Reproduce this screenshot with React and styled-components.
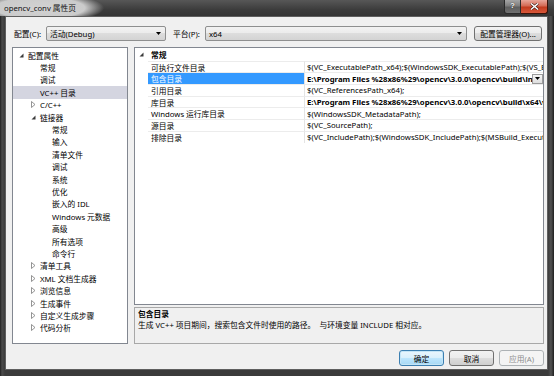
import styled, { createGlobalStyle } from "styled-components";

const GlobalStyle = createGlobalStyle`
  html, body { margin: 0; padding: 0; }
  body {
    width: 554px;
    height: 376px;
    overflow: hidden;
    font-family: "Noto Sans", "Noto Sans CJK SC", sans-serif;
    font-size: 7.75px;
    color: #000;
  }
`;

const treeItems = [
  { label: "配置属性", level: 0, exp: "open" },
  { label: "常规", level: 1 },
  { label: "调试", level: 1 },
  { label: "VC++ 目录", level: 1, selected: true },
  { label: "C/C++", level: 1, exp: "closed" },
  { label: "链接器", level: 1, exp: "open" },
  { label: "常规", level: 2 },
  { label: "输入", level: 2 },
  { label: "清单文件", level: 2 },
  { label: "调试", level: 2 },
  { label: "系统", level: 2 },
  { label: "优化", level: 2 },
  { label: "嵌入的 IDL", level: 2 },
  { label: "Windows 元数据", level: 2 },
  { label: "高级", level: 2 },
  { label: "所有选项", level: 2 },
  { label: "命令行", level: 2 },
  { label: "清单工具", level: 1, exp: "closed" },
  { label: "XML 文档生成器", level: 1, exp: "closed" },
  { label: "浏览信息", level: 1, exp: "closed" },
  { label: "生成事件", level: 1, exp: "closed" },
  { label: "自定义生成步骤", level: 1, exp: "closed" },
  { label: "代码分析", level: 1, exp: "closed" },
];

const gridRows = [
  { name: "可执行文件目录", value: "$(VC_ExecutablePath_x64);$(WindowsSDK_ExecutablePath);$(VS_ExecutablePath);$(MSBuild_ExecutablePath)" },
  { name: "包含目录", value: "E:\\Program Files %28x86%29\\opencv\\3.0.0\\opencv\\build\\include;E:\\Program Files", bold: true, selected: true },
  { name: "引用目录", value: "$(VC_ReferencesPath_x64);" },
  { name: "库目录", value: "E:\\Program Files %28x86%29\\opencv\\3.0.0\\opencv\\build\\x64\\vc12\\lib;$(LibraryPath)", bold: true },
  { name: "Windows 运行库目录", value: "$(WindowsSDK_MetadataPath);" },
  { name: "源目录", value: "$(VC_SourcePath);" },
  { name: "排除目录", value: "$(VC_IncludePath);$(WindowsSDK_IncludePath);$(MSBuild_ExecutablePath);$(VC_LibraryPath_x64)" },
];

function OpenArrow() {
  return (
    <svg width="5" height="5" viewBox="0 0 5 5">
      <polygon points="4.5,0.5 4.5,4.5 0.5,4.5" fill="#3a3a3a" />
    </svg>
  );
}

function ClosedArrow() {
  return (
    <svg width="5" height="7" viewBox="0 0 5 7">
      <polygon points="0.5,0.5 4,3.5 0.5,6.5" fill="#fff" stroke="#7a7a7a" strokeWidth="0.8" />
    </svg>
  );
}

function ComboArrow() {
  return (
    <svg width="5" height="3" viewBox="0 0 5 3">
      <polygon points="0,0 5,0 2.5,3" fill="#000" />
    </svg>
  );
}

export default function App() {
  return (
    <>
      <GlobalStyle />
      <Frame>
        <TitleBar>
          <TitleText>opencv_conv 属性页</TitleText>
          <CaptionButtons>
            <HelpButton>?</HelpButton>
            <CloseButton>
              <svg width="9" height="7" viewBox="0 0 9 7">
                <path d="M1 0.5 L8 6.5 M8 0.5 L1 6.5" stroke="#3a1a14" strokeWidth="2.6" />
                <path d="M1 0.5 L8 6.5 M8 0.5 L1 6.5" stroke="#fff" strokeWidth="1.5" />
              </svg>
            </CloseButton>
          </CaptionButtons>
        </TitleBar>

        <Client>
          <ConfigRow>
            <FieldLabel>配置(C):</FieldLabel>
            <Combo width="120px">
              <span>活动(Debug)</span>
              <ComboArrow />
            </Combo>
            <FieldLabel gap="6px">平台(P):</FieldLabel>
            <Combo grow>
              <span>x64</span>
              <ComboArrow />
            </Combo>
            <PushButton width="68px" gap="7px">配置管理器(O)...</PushButton>
          </ConfigRow>

          <MainArea>
            <Tree>
              {treeItems.map((item, i) => (
                <TreeRow key={i} level={item.level} selected={item.selected}>
                  <ExpSlot>
                    {item.exp === "open" && <OpenArrow />}
                    {item.exp === "closed" && <ClosedArrow />}
                  </ExpSlot>
                  <span>{item.label}</span>
                </TreeRow>
              ))}
            </Tree>

            <RightColumn>
              <Grid>
                <CategoryRow>
                  <MarginCell>
                    <OpenArrow />
                  </MarginCell>
                  <CategoryName>常规</CategoryName>
                </CategoryRow>
                {gridRows.map((row, i) => (
                  <PropRow key={i}>
                    <MarginCell />
                    <NameCell selected={row.selected}>{row.name}</NameCell>
                    <ValueCell bold={row.bold}>
                      <ValueText>{row.value}</ValueText>
                      {row.selected && (
                        <DropButton>
                          <ComboArrow />
                        </DropButton>
                      )}
                    </ValueCell>
                  </PropRow>
                ))}
              </Grid>
              <Description>
                <DescTitle>包含目录</DescTitle>
                <div>生成 VC++ 项目期间，搜索包含文件时使用的路径。&nbsp; 与环境变量 INCLUDE 相对应。</div>
              </Description>
            </RightColumn>
          </MainArea>

          <ButtonRow>
            <PushButton width="45px" height="16px" variant="default">确定</PushButton>
            <PushButton width="45px" height="16px">取消</PushButton>
            <PushButton width="45px" height="16px" variant="disabled">应用(A)</PushButton>
          </ButtonRow>
        </Client>
      </Frame>
    </>
  );
}

const Frame = styled.div`
  width: 554px;
  height: 376px;
  box-sizing: border-box;
  display: flex;
  flex-direction: column;
  background: linear-gradient(to right, #1f1f1f 0, #4b4b4b 2px, #3b3b3b 5px, #3b3b3b calc(100% - 6px), #525252 calc(100% - 3px), #1f1f1f 100%);
`;

const TitleBar = styled.div`
  height: 16px;
  flex: none;
  display: flex;
  align-items: flex-start;
  justify-content: space-between;
  background:
    radial-gradient(ellipse 64px 15px at 40px 8px, #d2d2d2 0%, #cbcbcb 70%, rgba(203, 203, 203, 0) 100%),
    linear-gradient(#575757, #3c3c3c 60%, #353535);
`;

const TitleText = styled.div`
  padding: 3px 0 0 4px;
  line-height: 10px;
  color: #111;
`;

const CaptionButtons = styled.div`
  display: flex;
  margin-right: 6px;
`;

const HelpButton = styled.div`
  width: 17px;
  height: 14px;
  box-sizing: border-box;
  border: 1px solid #2a2a2a;
  border-top: none;
  border-radius: 0 0 0 3px;
  background: linear-gradient(#a5a5a5, #7e7e7e 45%, #5e5e5e 55%, #707070);
  color: #fff;
  font-family: "Liberation Sans", sans-serif;
  font-weight: bold;
  font-size: 8px;
  line-height: 12px;
  text-align: center;
  text-shadow: 0 0 1px #000;
`;

const CloseButton = styled.div`
  width: 27px;
  height: 14px;
  box-sizing: border-box;
  border: 1px solid #3a1208;
  border-left: none;
  border-top: none;
  border-radius: 0 0 3px 0;
  background: linear-gradient(#e8a69a, #d46a55 45%, #c23b1f 55%, #d9583a);
  display: flex;
  align-items: center;
  justify-content: center;
`;

const Client = styled.div`
  flex: 1;
  margin: 0 6px 6px 5px;
  box-sizing: border-box;
  border: 1px solid #5f5f5f;
  background: #f0f0f0;
  padding: 9px 3px 3px 6px;
  display: flex;
  flex-direction: column;
`;

const ConfigRow = styled.div`
  display: flex;
  align-items: center;
  height: 15px;
  padding-right: 2px;
`;

const FieldLabel = styled.div`
  width: 33px;
  flex: none;
  margin-left: ${(p) => p.gap || "1px"};
  box-sizing: border-box;
  padding-left: 1px;
  white-space: nowrap;
`;

const Combo = styled.div`
  width: ${(p) => p.width || "auto"};
  flex: ${(p) => (p.grow ? "1" : "none")};
  height: 15px;
  box-sizing: border-box;
  border: 1px solid #8e8f8f;
  border-radius: 2px;
  background: linear-gradient(#f2f2f2, #ebebeb 50%, #dddddd 50%, #d3d3d3);
  display: flex;
  align-items: center;
  justify-content: space-between;
  padding: 0 4px 0 3px;
`;

const PushButton = styled.div`
  width: ${(p) => p.width};
  height: ${(p) => p.height || "15px"};
  flex: none;
  margin-left: ${(p) => p.gap || "0"};
  box-sizing: border-box;
  border-radius: 3px;
  display: flex;
  align-items: center;
  justify-content: center;
  white-space: nowrap;
  border: 1px solid
    ${(p) => (p.variant === "default" ? "#3c7fb1" : p.variant === "disabled" ? "#adb2b5" : "#707070")};
  color: ${(p) => (p.variant === "disabled" ? "#8d8d8d" : "#000")};
  background: ${(p) =>
    p.variant === "default"
      ? "linear-gradient(#eaf6fd, #d9f0fc 50%, #bee6fd 50%, #a7d9f5)"
      : p.variant === "disabled"
      ? "#f4f4f4"
      : "linear-gradient(#f2f2f2, #ebebeb 50%, #dddddd 50%, #cfcfcf)"};
  box-shadow: ${(p) => (p.variant === "default" ? "inset 0 0 0 1px #c4e5f6" : "none")};
`;

const MainArea = styled.div`
  margin-top: 6px;
  height: 297px;
  display: flex;
  gap: 6px;
`;

const Tree = styled.div`
  width: 116px;
  flex: none;
  box-sizing: border-box;
  border: 1px solid #828790;
  background: #fff;
  padding-top: 1px;
  overflow: hidden;
`;

const TreeRow = styled.div`
  height: 12.4px;
  display: flex;
  align-items: center;
  padding-left: ${(p) => 6 + p.level * 12}px;
  background: ${(p) => (p.selected ? "#d4d5e0" : "transparent")};
  white-space: nowrap;
`;

const ExpSlot = styled.span`
  width: 9px;
  flex: none;
  display: flex;
  align-items: center;
`;

const RightColumn = styled.div`
  flex: 1;
  display: flex;
  flex-direction: column;
  gap: 2px;
  min-width: 0;
`;

const Grid = styled.div`
  flex: 1;
  box-sizing: border-box;
  border: 1px solid #828790;
  background: #fff;
  padding-top: 1px;
  overflow: hidden;
`;

const CategoryRow = styled.div`
  height: 11.7px;
  display: flex;
  align-items: center;
`;

const MarginCell = styled.div`
  width: 13px;
  flex: none;
  display: flex;
  align-items: center;
  padding-left: 4px;
  box-sizing: border-box;
  align-self: stretch;
`;

const CategoryName = styled.div`
  padding-left: 3px;
  font-weight: bold;
`;

const PropRow = styled.div`
  height: 11.7px;
  display: flex;
`;

const NameCell = styled.div`
  width: 157px;
  flex: none;
  box-sizing: border-box;
  padding-left: 3px;
  display: flex;
  align-items: center;
  white-space: nowrap;
  border-top: 1px solid #ececec;
  border-right: 1px solid #e4e4e4;
  background: ${(p) => (p.selected ? "#3399ff" : "transparent")};
  color: ${(p) => (p.selected ? "#fff" : "#000")};
`;

const ValueCell = styled.div`
  flex: 1;
  min-width: 0;
  display: flex;
  align-items: center;
  padding-left: 2px;
  border-top: 1px solid #ececec;
  font-weight: ${(p) => (p.bold ? "bold" : "normal")};
`;

const ValueText = styled.span`
  flex: 1;
  min-width: 0;
  white-space: nowrap;
  overflow: hidden;
`;

const DropButton = styled.div`
  width: 11px;
  height: 10px;
  flex: none;
  box-sizing: border-box;
  border: 1px solid #9a9a9a;
  background: linear-gradient(#f5f5f5, #dedede);
  display: flex;
  align-items: center;
  justify-content: center;
`;

const Description = styled.div`
  height: 37px;
  flex: none;
  box-sizing: border-box;
  border: 1px solid #a8a8a8;
  background: #f0f0f0;
  padding: 1px 3px;
  line-height: 10.5px;
  white-space: nowrap;
  overflow: hidden;
`;

const DescTitle = styled.div`
  font-weight: bold;
`;

const ButtonRow = styled.div`
  margin-top: 6px;
  display: flex;
  justify-content: flex-end;
  gap: 5px;
`;
